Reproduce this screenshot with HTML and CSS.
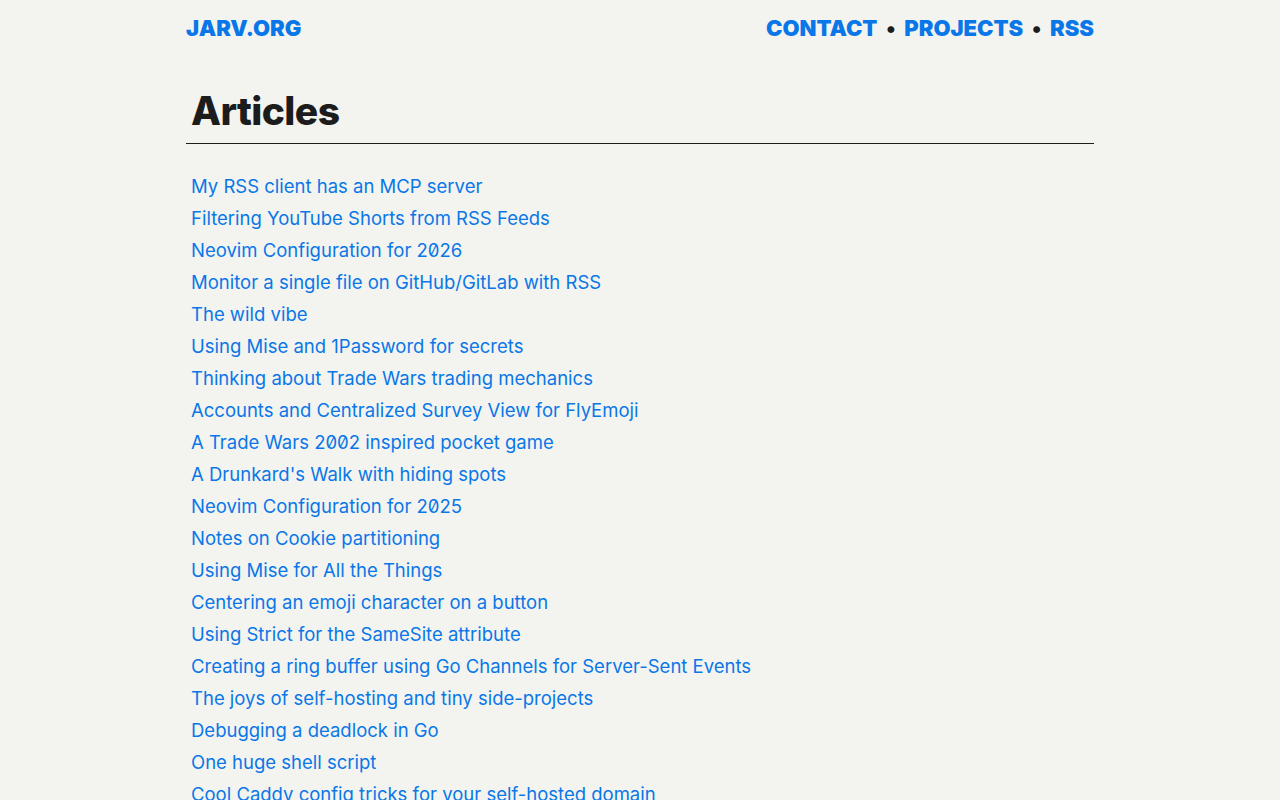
FILE: index.html
```html
<!DOCTYPE html>
<html lang="en">
<head>
    <meta charset="UTF-8">
    <meta name="viewport" content="width=device-width, initial-scale=1.0">
    <title>jarv.org</title>
    <link rel="stylesheet" href="styles.css">
</head>
<body>
    <div class="page">
        <header class="site-header">
            <a class="site-title" href="/">JARV.ORG</a>
            <nav class="site-nav">
                <a href="/contact/">CONTACT</a>
                <span class="dot">&bull;</span>
                <a href="/projects/">PROJECTS</a>
                <span class="dot">&bull;</span>
                <a href="/index.xml">RSS</a>
            </nav>
        </header>

        <main>
            <h1 class="page-title">Articles</h1>
            <ul class="post-list">
                <li><a href="#">My RSS client has an MCP server</a></li>
                <li><a href="#">Filtering YouTube Shorts from RSS Feeds</a></li>
                <li><a href="#">Neovim Configuration for 2026</a></li>
                <li><a href="#">Monitor a single file on GitHub/GitLab with RSS</a></li>
                <li><a href="#">The wild vibe</a></li>
                <li><a href="#">Using Mise and 1Password for secrets</a></li>
                <li><a href="#">Thinking about Trade Wars trading mechanics</a></li>
                <li><a href="#">Accounts and Centralized Survey View for FlyEmoji</a></li>
                <li><a href="#">A Trade Wars 2002 inspired pocket game</a></li>
                <li><a href="#">A Drunkard's Walk with hiding spots</a></li>
                <li><a href="#">Neovim Configuration for 2025</a></li>
                <li><a href="#">Notes on Cookie partitioning</a></li>
                <li><a href="#">Using Mise for All the Things</a></li>
                <li><a href="#">Centering an emoji character on a button</a></li>
                <li><a href="#">Using Strict for the SameSite attribute</a></li>
                <li><a href="#">Creating a ring buffer using Go Channels for Server-Sent Events</a></li>
                <li><a href="#">The joys of self-hosting and tiny side-projects</a></li>
                <li><a href="#">Debugging a deadlock in Go</a></li>
                <li><a href="#">One huge shell script</a></li>
                <li><a href="#">Cool Caddy config tricks for your self-hosted domain</a></li>
                <li><a href="#">Notes on running a small website</a></li>
            </ul>
        </main>
    </div>
</body>
</html>
```

FILE: styles.css
```css
body {
    margin: 0;
    background-color: #f3f4ef;
    color: #1c1c1c;
    font-family: Inter, "Noto Sans", sans-serif;
    font-variant-numeric: slashed-zero;
}
a {
    color: #0a77e8;
    text-decoration: none;
}
.page {
    width: 908px;
    margin: 0 auto;
}
.site-header {
    display: flex;
    justify-content: space-between;
    align-items: center;
    height: 56px;
    font-size: 22px;
    font-weight: 900;
}
.site-nav {
    display: flex;
    align-items: center;
    gap: 9px;
}
.dot {
    color: #1c1c1c;
}
.page-title {
    margin: 31px 0 0;
    padding: 0 5px 9px;
    font-size: 39px;
    font-weight: 800;
    letter-spacing: -0.6px;
    border-bottom: 1px solid #1c1c1c;
}
.post-list {
    list-style: none;
    margin: 26px 0 0;
    padding: 0 5px;
}
.post-list li {
    font-size: 18.5px;
    line-height: 32px;
}
```
